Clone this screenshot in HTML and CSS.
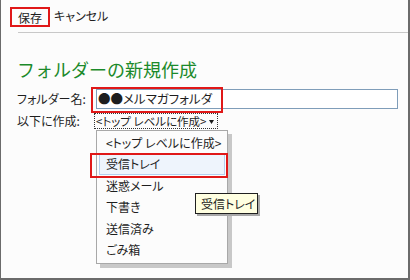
FILE: index.html
```html
<!DOCTYPE html>
<html lang="ja">
<head>
  <meta charset="UTF-8" />
  <title>フォルダーの新規作成</title>
  <link rel="stylesheet" href="styles.css">
</head>
<body>
<div class="frame">

  <!-- ツールバー -->
  <div class="toolbar">
    <span class="btn marked">保存</span>
    <span class="btn">キャンセル</span>
  </div>
  <div class="sep"></div>

  <h1>フォルダーの新規作成</h1>

  <div class="form">
    <div class="row">
      <label>フォルダー名:</label>
      <div class="input">●●メルマガフォルダ</div>
    </div>
    <div class="row">
      <label>以下に作成:</label>
      <div class="select">
        <span>&lt;トップ レベルに作成&gt;</span>
        <svg class="arrow" width="5" height="4" viewBox="0 0 5 4"><path d="M0 0h5L2.5 4z" fill="#1a1a1a"/></svg>
      </div>
    </div>
  </div>

  <!-- ドロップダウン -->
  <ul class="list">
    <li>&lt;トップ レベルに作成&gt;</li>
    <li class="active">受信トレイ</li>
    <li>迷惑メール</li>
    <li>下書き</li>
    <li>送信済み</li>
    <li>ごみ箱</li>
  </ul>

  <div class="tooltip">受信トレイ</div>

  <!-- 赤枠の注記 -->
  <div class="mark mark-name"></div>
  <div class="mark mark-item"></div>
</div>
</body>
</html>
```

FILE: styles.css
```css
* {
  box-sizing: border-box;
}

body {
  margin: 0;
  background: #fcfcfc;
  font-family: "Noto Sans CJK JP", "DejaVu Sans", sans-serif;
  font-size: 12px;
  color: #1e1e1e;
}

.frame {
  position: relative;
  width: 410px;
  height: 280px;
  border-left: 1px solid #6b6b6b;
  border-right: 2px solid #6b6b6b;
  border-bottom: 2px solid #6b6b6b;
  overflow: hidden;
}

.toolbar {
  display: flex;
  align-items: center;
  gap: 2px;
  padding: 7px 0 0 9px;
  height: 27px;
}

.btn {
  height: 20px;
  line-height: 18px;
  padding: 0 2px;
  font-feature-settings: "palt";
}

.btn.marked {
  border: 2px solid #e01818;
  padding: 0 6px;
}

.sep {
  margin: 5px 0 0 17px;
  border-top: 1px solid #c8c8c8;
}

h1 {
  margin: 24px 0 0 16px;
  font-size: 18px;
  line-height: 24px;
  font-weight: normal;
  color: #1b8a2a;
}

.form {
  margin: 8px 0 0 16px;
  display: flex;
  flex-direction: column;
  gap: 4px;
}

.row {
  display: flex;
  align-items: center;
}

.row label {
  width: 79px;
  line-height: 16px;
  font-feature-settings: "palt";
}

.input {
  width: 302px;
  height: 20px;
  line-height: 18px;
  border: 1px solid #7f9db9;
  background: #fff;
  padding-left: 1px;
  font-size: 12.5px;
  font-feature-settings: "palt";
}

.select {
  display: flex;
  align-items: center;
  justify-content: space-between;
  margin-left: -2px;
  width: 124px;
  height: 16px;
  line-height: 14px;
  border: 1px dotted #333;
  padding: 0 3px 0 1px;
  white-space: nowrap;
  font-size: 11.5px;
  font-feature-settings: "palt";
}

.arrow {
  margin-top: 1px;
}

.list {
  position: absolute;
  left: 95px;
  top: 130px;
  width: 132px;
  height: 134px;
  margin: 0;
  padding: 1px 0 0;
  list-style: none;
  background: #fcfcfc;
  border: 1px solid #a8a8a8;
  box-shadow: 4px 4px 0 #c8c8c8;
}

.list li {
  height: 21.4px;
  line-height: 19.4px;
  margin: 0 2px;
  padding-left: 6px;
  border: 1px solid transparent;
  white-space: nowrap;
  font-feature-settings: "palt";
}

.list li.active {
  background: #eef4fc;
  border-color: #b4cfee;
}

.tooltip {
  position: absolute;
  left: 194px;
  top: 193px;
  width: 63px;
  height: 21px;
  line-height: 19px;
  padding-left: 5px;
  background: #ffffe1;
  border: 1px solid #202020;
  box-shadow: 2px 2px 0 #a8a8a8;
  font-feature-settings: "palt";
}

.mark {
  position: absolute;
  border: 2px solid #e01818;
}

.mark-name {
  left: 90px;
  top: 87px;
  width: 132px;
  height: 26px;
}

.mark-item {
  left: 89px;
  top: 153px;
  width: 138px;
  height: 25px;
}
```
